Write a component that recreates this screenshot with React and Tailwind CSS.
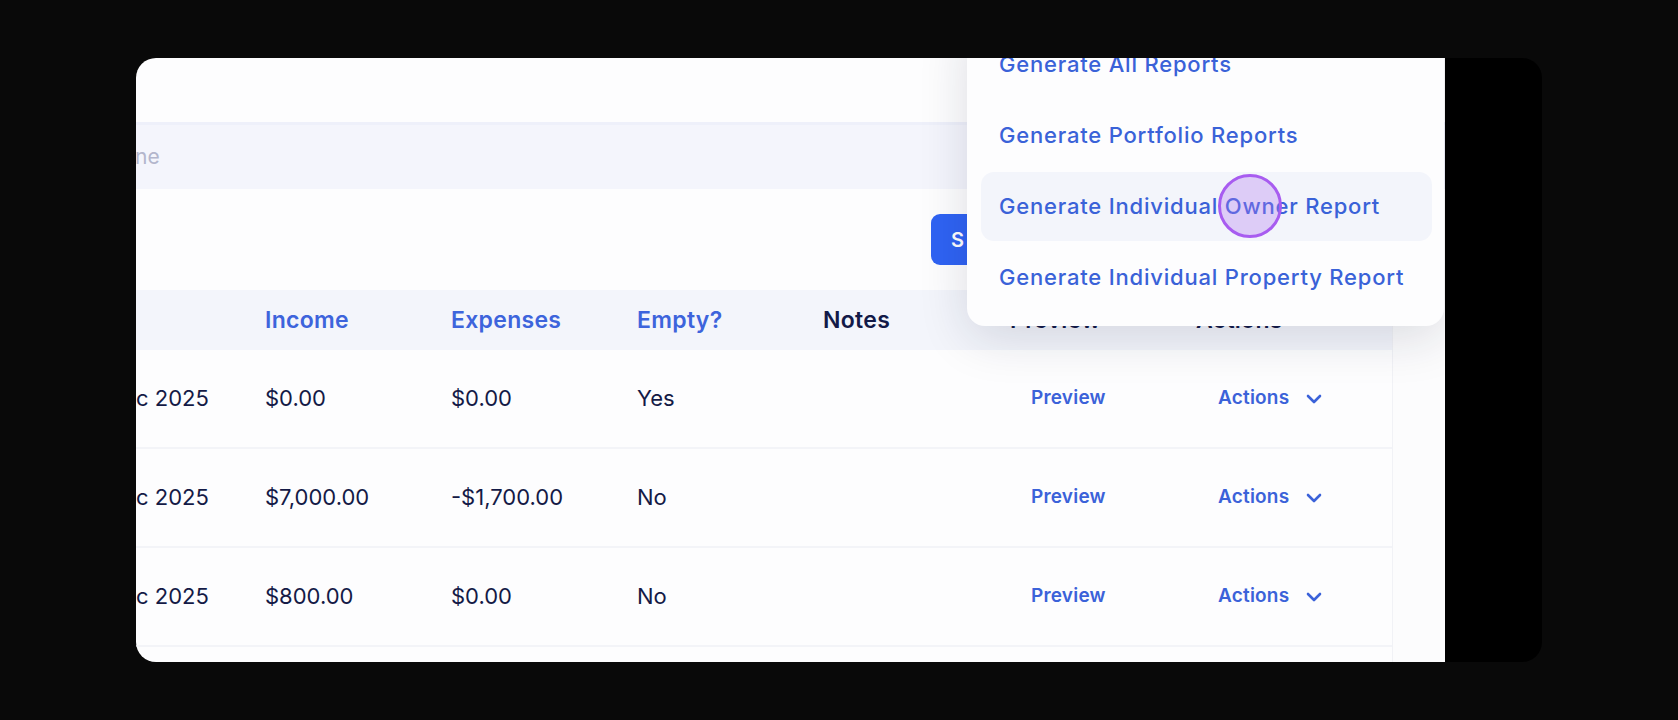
import React from "react";

const F = { fontFamily: "Inter, 'Noto Sans', sans-serif" };

const rows = [
  { m: "c 2025", inc: "$0.00", exp: "$0.00", empty: "Yes" },
  { m: "c 2025", inc: "$7,000.00", exp: "-$1,700.00", empty: "No" },
  { m: "c 2025", inc: "$800.00", exp: "$0.00", empty: "No" },
];

function Chevron() {
  return (
    <svg width="16" height="10" viewBox="0 0 16 10" fill="none" stroke="#3b62d9" strokeWidth="2.6" strokeLinecap="round" strokeLinejoin="round">
      <path d="M2 2l6 6 6-6" />
    </svg>
  );
}

export default function App() {
  return (
    <div className="w-[1678px] h-[720px] bg-[#090909] overflow-hidden pt-[58px] pl-[136px]" style={F}>
      <div className="w-[1406px] h-[604px] rounded-[20px] overflow-hidden bg-black flex">
        <div className="relative w-[1309px] h-full bg-[#fdfdfe] overflow-hidden">
          {/* top bar */}
          <div className="h-[64px]" />
          {/* search band */}
          <div className="h-[67px] border-t-[3px] border-[#eef0fa] bg-[#f4f5fc] flex items-center">
            <span className="text-[21px] text-[#b3b6cc] -ml-[1px]">ne</span>
          </div>
          {/* toolbar */}
          <div className="h-[101px] pt-[25px] pl-[795px]">
            <div className="w-[150px] h-[51px] rounded-[9px] bg-[#2f63f3] flex items-center pl-[20px]">
              <span className="text-white text-[20px] font-semibold">S</span>
            </div>
          </div>
          {/* table */}
          <div className="flex">
            <div className="w-[1256px]">
              <div className="h-[60px] bg-[#f3f5fb] grid grid-cols-[129px_186px_186px_186px_187px_186px_196px] items-center text-[23px] tracking-[0.3px] font-semibold text-[#3d64dc]">
                <div />
                <div>Income</div>
                <div>Expenses</div>
                <div>Empty?</div>
                <div className="text-[#121a48]">Notes</div>
                <div className="text-[#121a48]">Preview</div>
                <div className="text-[#121a48]">Actions</div>
              </div>
              {rows.map((r, i) => (
                <div key={i} className="h-[99px] border-b-[2px] border-[#f3f4f8] grid grid-cols-[129px_186px_186px_186px_187px_186px_196px] items-center text-[22px] text-[#141a46]">
                  <div>{r.m}</div>
                  <div>{r.inc}</div>
                  <div>{r.exp}</div>
                  <div>{r.empty}</div>
                  <div />
                  <div className="pl-[21px] text-[19px] tracking-[0.2px] font-semibold text-[#3b62d9]">Preview</div>
                  <div className="pl-[22px] flex items-center gap-[17px] text-[19px] tracking-[0.2px] font-semibold text-[#3b62d9]">
                    <span>Actions</span>
                    <Chevron />
                  </div>
                </div>
              ))}
              <div className="h-[40px]" />
            </div>
            <div className="flex-1 border-l border-[#f1f2f6] bg-[#fcfcfd]" />
          </div>

          {/* dropdown */}
          <div className="absolute left-[831px] top-[-43px] w-[477px] rounded-[18px] bg-[#fdfdfe] shadow-[0_12px_50px_rgba(20,25,60,0.14)] pt-[15px] pb-[14px] pl-[14px] pr-[12px] flex flex-col gap-[2px]">
            {[
              "Generate All Reports",
              "Generate Portfolio Reports",
              "Generate Individual Owner Report",
              "Generate Individual Property Report",
            ].map((t, i) => (
              <div
                key={t}
                className={
                  "h-[69px] rounded-[13px] flex items-center pl-[18px] text-[22px] tracking-[0.8px] font-medium text-[#3a62d8] " +
                  (i === 2 ? "bg-[#f3f5fb]" : "")
                }
              >
                {t}
              </div>
            ))}
          </div>

          {/* cursor */}
          <div className="absolute left-[1082px] top-[116px] w-[64px] h-[64px] rounded-full border-[3px] border-[#a85cf0] bg-[rgba(175,120,240,0.33)]" />
        </div>
      </div>
    </div>
  );
}
